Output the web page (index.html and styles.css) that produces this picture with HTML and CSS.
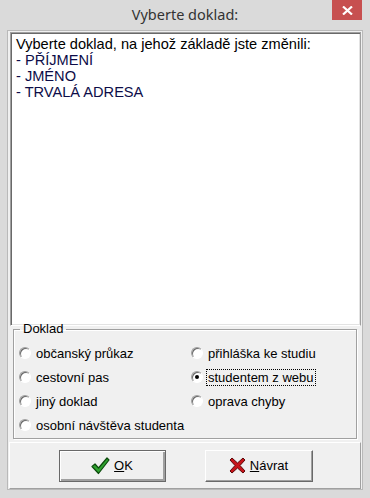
FILE: index.html
```html
<!DOCTYPE html>
<html lang="cs">
<head>
  <meta charset="UTF-8" />
  <title>Vyberte doklad</title>
  <link rel="stylesheet" href="styles.css">
</head>
<body>

<div class="window">
  <div class="titlebar">
    <div class="title">Vyberte doklad:</div>
    <button class="close">
      <svg width="11" height="9" viewBox="0 0 11 9"><path d="M1 0.5 L10 8.5 M10 0.5 L1 8.5" stroke="#fff" stroke-width="2.2"/></svg>
    </button>
  </div>

  <div class="client">
    <div class="memo">
      <div>Vyberte doklad, na jehož základě jste změnili:</div>
      <div class="item">- PŘÍJMENÍ</div>
      <div class="item">- JMÉNO</div>
      <div class="item">- TRVALÁ ADRESA</div>
    </div>

    <fieldset class="group">
      <legend>Doklad</legend>
      <div class="radios">
        <label class="radio"><span class="dot"></span>občanský průkaz</label>
        <label class="radio"><span class="dot"></span>přihláška ke studiu</label>
        <label class="radio"><span class="dot"></span>cestovní pas</label>
        <label class="radio"><span class="dot checked"></span><span class="focus">studentem z webu</span></label>
        <label class="radio"><span class="dot"></span>jiný doklad</label>
        <label class="radio"><span class="dot"></span>oprava chyby</label>
        <label class="radio wide"><span class="dot"></span>osobní návštěva studenta</label>
      </div>
    </fieldset>

    <div class="panel">
      <button class="btn default">
        <svg width="19" height="18" viewBox="0 0 19 18"><path d="M1 9.5 L4 7 L7.5 11 L16 1 L18 3 L7.5 16.5 Z" fill="#2fa32f" stroke="#0c4a0c" stroke-width="1.2" stroke-linejoin="round"/></svg>
        <span><u>O</u>K</span>
      </button>
      <button class="btn">
        <svg width="17" height="17" viewBox="0 0 17 17"><path d="M1 3 L3 1 L8.5 6 L14 1 L16 3 L11 8.5 L16 14 L14 16 L8.5 11 L3 16 L1 14 L6 8.5 Z" fill="#c8141a" stroke="#5a0a0a" stroke-width="1" stroke-linejoin="round"/></svg>
        <span><u>N</u>ávrat</span>
      </button>
    </div>
  </div>
</div>

</body>
</html>
```

FILE: styles.css
```css
body{
  margin:0;
  background:#dadada;
  font-family:"Liberation Sans", Arial, sans-serif;
  font-size:13px;
}
.window{
  width:370px;height:498px;
  display:flex;flex-direction:column;
}
.titlebar{
  height:30px;flex:none;
  display:flex;align-items:flex-start;
}
.title{
  flex:1;
  padding-left:38px;
  text-align:center;
  font-family:"Noto Sans", sans-serif;
  font-size:14.5px;
  color:#333;
  line-height:29px;
}
.close{
  width:30px;height:20px;margin-right:8px;
  border:none;padding:0;
  background:#c75050;
  display:flex;align-items:center;justify-content:center;
}
.client{
  flex:1;
  margin:0 7px 8px;
  background:#f0f0f0;
  border:1px solid #b9b9b9;
  padding:1px 1px 0;
  display:flex;flex-direction:column;
}
.memo{
  height:286px;flex:none;
  margin:0 0 0 1px;
  background:#fff;
  border:1px solid;
  border-color:#a0a0a0 #a0a0a0 #fff #a0a0a0;
  box-shadow:inset 1px 1px #696969, inset -1px -1px #e3e3e3;
  padding:3px 5px;
  line-height:16px;
  font-size:14.6px;
  color:#000;
}
.memo .item{color:#0c0c48;}
.group{
  margin:-5px 4px 0 4px;
  padding:0;
  height:116px;
  border:1px solid #a0a0a0;
  box-shadow:inset 1px 1px #fff, 1px 1px #fff;
  min-width:0;
}
.group legend{
  margin-left:6px;
  padding:0 3px;
  line-height:16px;
  color:#000;
}
.radios{
  display:grid;
  grid-template-columns:172px 1fr;
  grid-auto-rows:24px;
  padding:4px 0 0 5px;
}
.radio{
  display:flex;align-items:center;gap:5px;
  color:#000;
}
.radio.wide{grid-column:1 / 3;}
.dot{
  width:10px;height:10px;flex:none;
  border-radius:50%;
  background:#fff;
  border:1px solid;
  border-color:#a0a0a0 #fff #fff #a0a0a0;
  box-shadow:inset 1px 1px #696969;
  display:flex;align-items:center;justify-content:center;
}
.dot.checked::after{
  content:"";
  width:4px;height:4px;border-radius:50%;
  background:#000;
}
.focus{
  outline:1px dotted #000;
  padding:0 1px;
  margin-left:-1px;
}
.panel{
  flex:1;
  margin-top:3px;
  border:1px solid;
  border-color:#fff #a0a0a0 #a0a0a0 #fff;
  display:flex;align-items:center;justify-content:center;
  gap:39px;
  padding-left:1px;
}
.btn{
  width:107px;height:32px;
  background:#f0f0f0;
  border:1px solid;
  border-color:#fff #696969 #696969 #fff;
  box-shadow:inset -1px -1px #a0a0a0;
  display:flex;align-items:center;justify-content:center;gap:4px;
  font-family:"Liberation Sans", Arial, sans-serif;
  font-size:13px;color:#000;
  padding:0;
}
.btn + .btn{width:108px;}
.btn.default{
  border-color:#696969;
  box-shadow:inset 1px 1px #fff, inset -2px -2px #a0a0a0;
}
```
